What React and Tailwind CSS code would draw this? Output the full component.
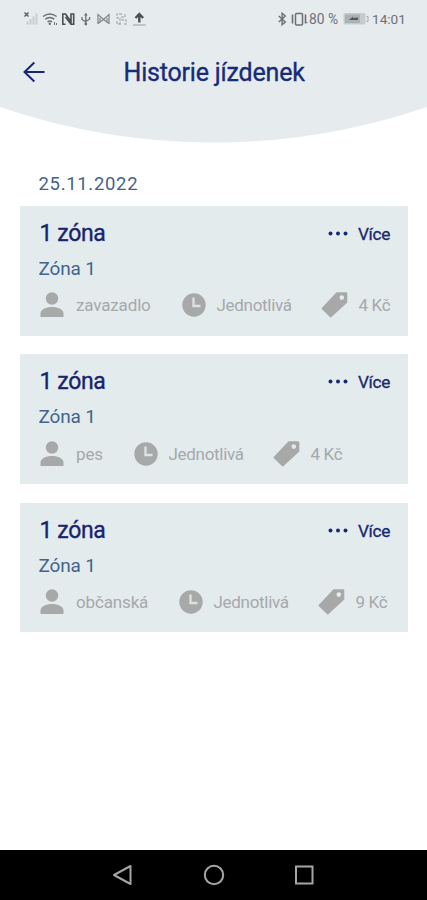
import React from "react";

const tickets = [
  { passenger: "zavazadlo", price: "4 Kč", passengerClass: "w-[74.5px]" },
  { passenger: "pes", price: "4 Kč", passengerClass: "w-[26.5px]" },
  { passenger: "občanská", price: "9 Kč", passengerClass: "w-[71.5px]" },
];

function StatusBar() {
  return (
    <div className="flex h-[37px] items-center justify-between pr-[21px] pl-[23px] text-[#6c7073]">
      <svg width="124" height="16" viewBox="0 0 124 16" fill="none" stroke="currentColor">
        <path d="M1.5 1.5l4 4M5.5 1.5l-4 4" stroke="#55595c" strokeWidth="1.3" />
        <path d="M4.5 13.5v-3M7.5 13.5V8M10.5 13.5V5.5M13.5 13.5V2.5" stroke="#c8cdd0" strokeWidth="2" />
        <path d="M20 5.5q6.8-5 13.600 0M22.300 8.200q4.500-3.400 9 0M24.600 10.800q2.200-1.700 4.400 0" strokeWidth="1.500" />
        <circle cx="26.800" cy="12.800" r="1.200" fill="currentColor" stroke="none" />
        <path d="M31.500 11v3M33.500 14v-2" strokeWidth="1" />
        <path d="M42.500 13.200h-2.700V3h2.700l5.500 7.500V3h2.700v10.200H48L42.500 6" stroke="#4b5053" strokeWidth="1.600" />
        <path d="M62.800 2.800v10.500M59 6v2.500l3.800 2.500M66.600 6v2l-3.800 2.500" strokeWidth="1.300" />
        <path d="M61 4.500l1.800-2.700 1.800 2.700z" fill="currentColor" stroke="none" />
        <circle cx="62.800" cy="13" r="1.400" fill="currentColor" stroke="none" />
        <path d="M75 13V3.500l5.500 5 5.500-5V13M75 12.500l5.500-4 5.500 4M77 7v4M84 7v4" stroke="#808487" strokeWidth="1.200" />
        <path d="M99 3h-5v4h3v6M94 10v3h4M102 3v3h-3v3h4v4h-3" stroke="#b0b5b8" strokeWidth="1.300" strokeDasharray="3 1" />
        <path d="M116.300 11.500V3.500M112.500 7l3.800-4 3.800 4" stroke="#4b5053" strokeWidth="2.400" />
        <path d="M110 14h12.800" stroke="#a0a4a7" strokeWidth="1.100" />
      </svg>
      <div className="flex items-center">
        <svg width="32" height="16" viewBox="0 0 32 16" fill="none" stroke="currentColor">
          <path d="M.8 5l6.500 6-3.200 2.800V2.200L7.300 5l-6.500 6" strokeWidth="1.400" />
          <rect x="17.500" y="2.500" width="7" height="11.500" rx="1" strokeWidth="1.500" />
          <path d="M14.500 3.500v9M27.500 3.500v9" strokeWidth="1.600" />
          <path d="M29.500 11.500h-2" strokeWidth="1" />
        </svg>
        <span className="-ml-[1px] w-[32px] text-[13.800px] leading-4 whitespace-nowrap">80 %</span>
        <svg width="26" height="14" viewBox="0 0 26 14" className="ml-[2px]">
          <rect x=".5" y="1" width="22" height="11.500" rx="1.500" fill="#c6cbce" />
          <rect x="2" y="2.500" width="15" height="8.500" fill="#acb1b4" />
          <path d="M6 8l4-3.500v1.500l5-.5v2.500z" fill="#55595c" />
          <path d="M23.500 4.500h1.500v5h-1.500" fill="none" stroke="#a3a8ab" />
        </svg>
        <span className="ml-[3px] w-[34px] text-[13.600px] leading-4 whitespace-nowrap">14:01</span>
      </div>
    </div>
  );
}

function Header() {
  return (
    <header className="grid h-[143px] shrink-0">
      <svg className="col-start-1 row-start-1" width="427" height="143" viewBox="0 0 427 143">
        <path d="M0 0h427v107q-104 35.500-213.500 35.500T0 107z" fill="#e6ebee" />
      </svg>
      <div className="col-start-1 row-start-1">
        <StatusBar />
        <div className="flex h-[70px] items-center pl-[23px]">
          <svg width="22" height="22" viewBox="0 0 22 22" fill="none" stroke="#19257d" strokeWidth="2">
            <path d="M21.500 11H1.500M11.300 1.500L1.500 11l9.800 9.500" />
          </svg>
          <h1 className="ml-[78.500px] pt-[2px] text-[25px] leading-8 font-normal tracking-[-0.190px] whitespace-nowrap text-[#172b78] [-webkit-text-stroke:0.350px_#172b78]">
            Historie jízdenek
          </h1>
        </div>
      </div>
    </header>
  );
}

function PersonIcon() {
  return (
    <svg width="24" height="26" viewBox="0 0 24 26" fill="#a7a9a9">
      <circle cx="12" cy="6.500" r="6.200" />
      <path d="M.5 25v-3.500C.5 17.500 6 15 12 15s11.500 2.500 11.500 6.500V25z" />
    </svg>
  );
}

function ClockIcon() {
  return (
    <svg width="24" height="24" viewBox="0 0 24 24">
      <circle cx="12" cy="12" r="11.700" fill="#a7a9a9" />
      <path d="M11.500 4.500v8.500h7" fill="none" stroke="#dce3e5" strokeWidth="2.300" />
    </svg>
  );
}

function TagIcon() {
  return (
    <svg width="27" height="26" viewBox="0 0 27 26">
      <path
        d="M15.500.3h9.700q1.100 0 1.100 1.100v9.100L10.300 25.300Q9.800 25.800 9.200 25.200L.7 17.100Q.1 16.500.7 15.900zM20.800 3.300a2.300 2.300 0 1 0 0 4.600 2.300 2.300 0 0 0 0-4.600z"
        fill="#a7a9a9"
        fillRule="evenodd"
      />
    </svg>
  );
}

function TicketCard({ ticket }) {
  return (
    <article className="h-[129.500px] bg-[#e4ebed] pt-[12.800px] pl-[19px]">
      <div className="flex h-[30px] items-center justify-between pr-[18px]">
        <h2 className="ml-[1px] text-[23px] leading-[30px] font-normal tracking-[-0.400px] text-[#17246f] [-webkit-text-stroke:0.350px_#17246f]">
          1 zóna
        </h2>
        <button className="flex items-center text-[#17296f]">
          <svg width="20" height="6" viewBox="0 0 20 6" fill="currentColor">
            <circle cx="2.500" cy="2.500" r="2" />
            <circle cx="10" cy="2.500" r="2" />
            <circle cx="17.500" cy="2.500" r="2" />
          </svg>
          <span className="ml-[10.500px] w-[31.500px] text-left text-[17.300px] leading-6 tracking-[-0.400px] whitespace-nowrap [-webkit-text-stroke:0.300px_#17296f]">
            Více
          </span>
        </button>
      </div>
      <p className="mt-[8px] text-[19px] leading-6 tracking-[-0.150px] text-[#41648e]">Zóna 1</p>
      <div className="mt-[11.500px] flex h-[26px] items-center pl-[1px] text-[17px] leading-6 tracking-[-0.150px] whitespace-nowrap text-[#a4a9aa]">
        <PersonIcon />
        <span className={"ml-[12.500px] " + ticket.passengerClass}>{ticket.passenger}</span>
        <span className="ml-[31px] flex"><ClockIcon /></span>
        <span className="ml-[11px] w-[75px] tracking-[-0.300px]">Jednotlivá</span>
        <span className="ml-[29px] flex"><TagIcon /></span>
        <span className="ml-[11px] tracking-[-0.350px]">{ticket.price}</span>
      </div>
    </article>
  );
}

function NavigationBar() {
  return (
    <nav className="flex h-[50.500px] shrink-0 items-center justify-between bg-black px-[112px]">
      <svg width="22" height="22" viewBox="0 0 22 22" fill="none" stroke="#a5a5a5" strokeWidth="2">
        <path d="M18.500 2v18L2 11z" strokeLinejoin="round" />
      </svg>
      <svg width="22" height="22" viewBox="0 0 22 22" fill="none" stroke="#a5a5a5" strokeWidth="2">
        <circle cx="11" cy="11" r="9.200" />
      </svg>
      <svg width="22" height="22" viewBox="0 0 22 22" fill="none" stroke="#a5a5a5" strokeWidth="2">
        <rect x="3" y="2.500" width="16.500" height="17" />
      </svg>
    </nav>
  );
}

export default function App() {
  return (
    <div className="flex h-[900px] w-[427px] flex-col overflow-hidden bg-white font-['Roboto',sans-serif]">
      <Header />
      <main className="flex-1 px-[19.500px] pt-[29px]">
        <time className="block h-[34px] pl-[19px] text-[18.500px] leading-6 tracking-[0.680px] text-[#456289]">25.11.2022</time>
        <section className="flex flex-col gap-[18.900px]">
          {tickets.map((ticket) => (
            <TicketCard key={ticket.passenger} ticket={ticket} />
          ))}
        </section>
      </main>
      <NavigationBar />
    </div>
  );
}
